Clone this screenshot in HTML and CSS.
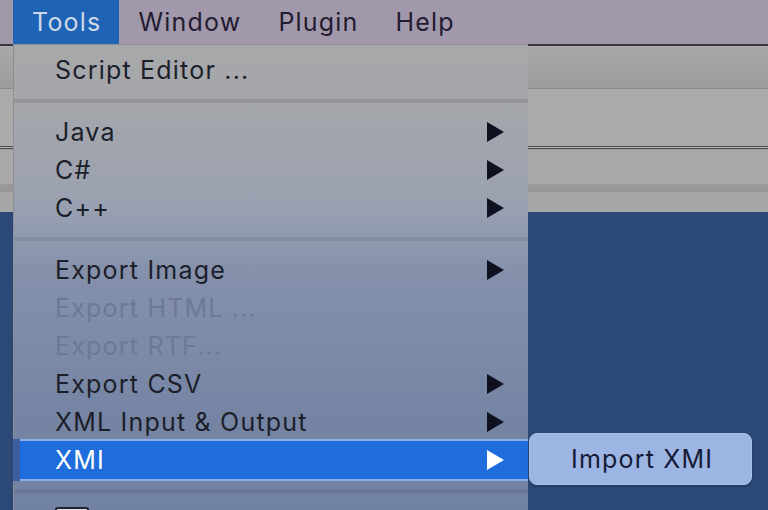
FILE: index.html
```html
<!DOCTYPE html>
<html>
<head>
<meta charset="utf-8">
<link rel="stylesheet" href="styles.css">
</head>
<body>
<div class="screen">
  <div class="menubar">
    <span class="mb-item active">Tools</span>
    <span class="mb-item">Window</span>
    <span class="mb-item">Plugin</span>
    <span class="mb-item">Help</span>
  </div>
  <div class="backdrop">
    <div class="bd-topline"></div>
    <div class="bd-toolbar"></div>
    <div class="bd-line"></div>
    <div class="bd-row1"></div>
    <div class="bd-double"></div>
    <div class="bd-row2"></div>
    <div class="bd-band"></div>
    <div class="bd-row3"></div>
    <div class="bd-blue"></div>
  </div>

  <div class="menu">
    <div class="item">Script Editor ...</div>
    <div class="sep"></div>
    <div class="item">Java<span class="arrow"></span></div>
    <div class="item">C#<span class="arrow"></span></div>
    <div class="item">C++<span class="arrow"></span></div>
    <div class="sep"></div>
    <div class="item">Export Image<span class="arrow"></span></div>
    <div class="item disabled">Export HTML ...</div>
    <div class="item disabled">Export RTF...</div>
    <div class="item">Export CSV<span class="arrow"></span></div>
    <div class="item">XML Input &amp; Output<span class="arrow"></span></div>
    <div class="item selected">XMI<span class="arrow"></span></div>
    <div class="sep"></div>
    <div class="item"><span class="check"></span></div>
  </div>

  <div class="submenu">
    <div class="sub-item">Import XMI</div>
  </div>
</div>
</body>
</html>
```
FILE: styles.css
```css
html, body {
  margin: 0;
  padding: 0;
}
body {
  width: 768px;
  height: 510px;
  overflow: hidden;
  font-family: "Inter", "Liberation Sans", sans-serif;
}
.screen {
  position: relative;
  width: 768px;
  height: 510px;
  overflow: hidden;
  display: flex;
  flex-direction: column;
}
.menubar {
  height: 44px;
  background: #a198ab;
  display: flex;
  align-items: stretch;
  padding-left: 13px;
  font-size: 25px;
  letter-spacing: 1.2px;
  color: #231b30;
}
.mb-item {
  display: flex;
  align-items: center;
  padding: 0 18px 0 19px;
}
.mb-item.active {
  background: #1e63b6;
  color: #cfd8e8;
}
.backdrop {
  flex: 1;
  display: flex;
  flex-direction: column;
}
.bd-topline { height: 2px; background: #3a3646; }
.bd-toolbar { height: 42px; background: linear-gradient(#a9a9a9, #9c9c9c); }
.bd-line { height: 1px; background: #8a8a8a; }
.bd-row1 { height: 57px; background: #aaaaaa; }
.bd-double {
  height: 4px;
  background: linear-gradient(#4c4c4c 0 1px, #b4b4b4 1px 2px, #4c4c4c 2px 3px, #9a9a9a 3px);
}
.bd-row2 { height: 34px; background: #a9a9a9; }
.bd-band { height: 8px; background: linear-gradient(#9a9a9a, #969696); }
.bd-row3 { height: 20px; background: #a7a7a7; }
.bd-blue { flex: 1; background: #2c4877; }

.menu {
  position: absolute;
  left: 13px;
  top: 44px;
  width: 515px;
  bottom: 0;
  box-sizing: border-box;
  border-left: 1px solid #8c8e94;
  border-top: 1px solid #8e8f94;
  padding-top: 6px;
  background: linear-gradient(#a8a8aa 0px, #a4a6aa 60px, #9ca2b0 150px, #8e99b0 200px, #8591ab 225px, #7d8aa8 300px, #7584a3 380px, #7282a2 466px);
  font-size: 25px;
  letter-spacing: 1.2px;
  color: #1c1f2a;
}
.item {
  height: 38px;
  display: flex;
  align-items: center;
  padding-left: 41px;
  padding-right: 24px;
  position: relative;
}
.item.disabled { color: #6b7995; }
.arrow {
  margin-left: auto;
  width: 0;
  height: 0;
  border-top: 10px solid transparent;
  border-bottom: 10px solid transparent;
  border-left: 17px solid #0f1020;
}
.item.selected {
  background: #1f6ddd;
  color: #ffffff;
  border-top: 2px solid #8fb0e6;
  border-bottom: 2px solid #8fb0e6;
  margin-left: 6px;
  padding-left: 35px;
  height: 38px;
  margin-top: -2px;
  margin-bottom: -2px;
}
.item.selected::before {
  content: "";
  position: absolute;
  left: -7px;
  top: -2px;
  bottom: -2px;
  width: 7px;
  background: #3d5e9f;
}
.item.selected .arrow { border-left-color: #ffffff; }
.sep {
  height: 24px;
  display: flex;
  align-items: center;
}
.sep::after {
  content: "";
  flex: 1;
  height: 4px;
  background: rgba(40, 44, 60, 0.12);
}
.check {
  width: 30px;
  height: 30px;
  border: 2px solid #1e222c;
  border-radius: 3px;
  background: #dcdde2;
  align-self: flex-start;
  margin-top: 4px;
}
.submenu {
  position: absolute;
  left: 529px;
  top: 433px;
  width: 223px;
  height: 52px;
  box-sizing: border-box;
  border-radius: 8px;
  background: #9db5e3;
  border: 1px solid #a9bfe8;
  box-shadow: 0 1px 3px rgba(0, 0, 0, 0.25);
  display: flex;
  align-items: center;
  padding-left: 41px;
  font-size: 25px;
  letter-spacing: 1.2px;
  color: #141a36;
}
```
